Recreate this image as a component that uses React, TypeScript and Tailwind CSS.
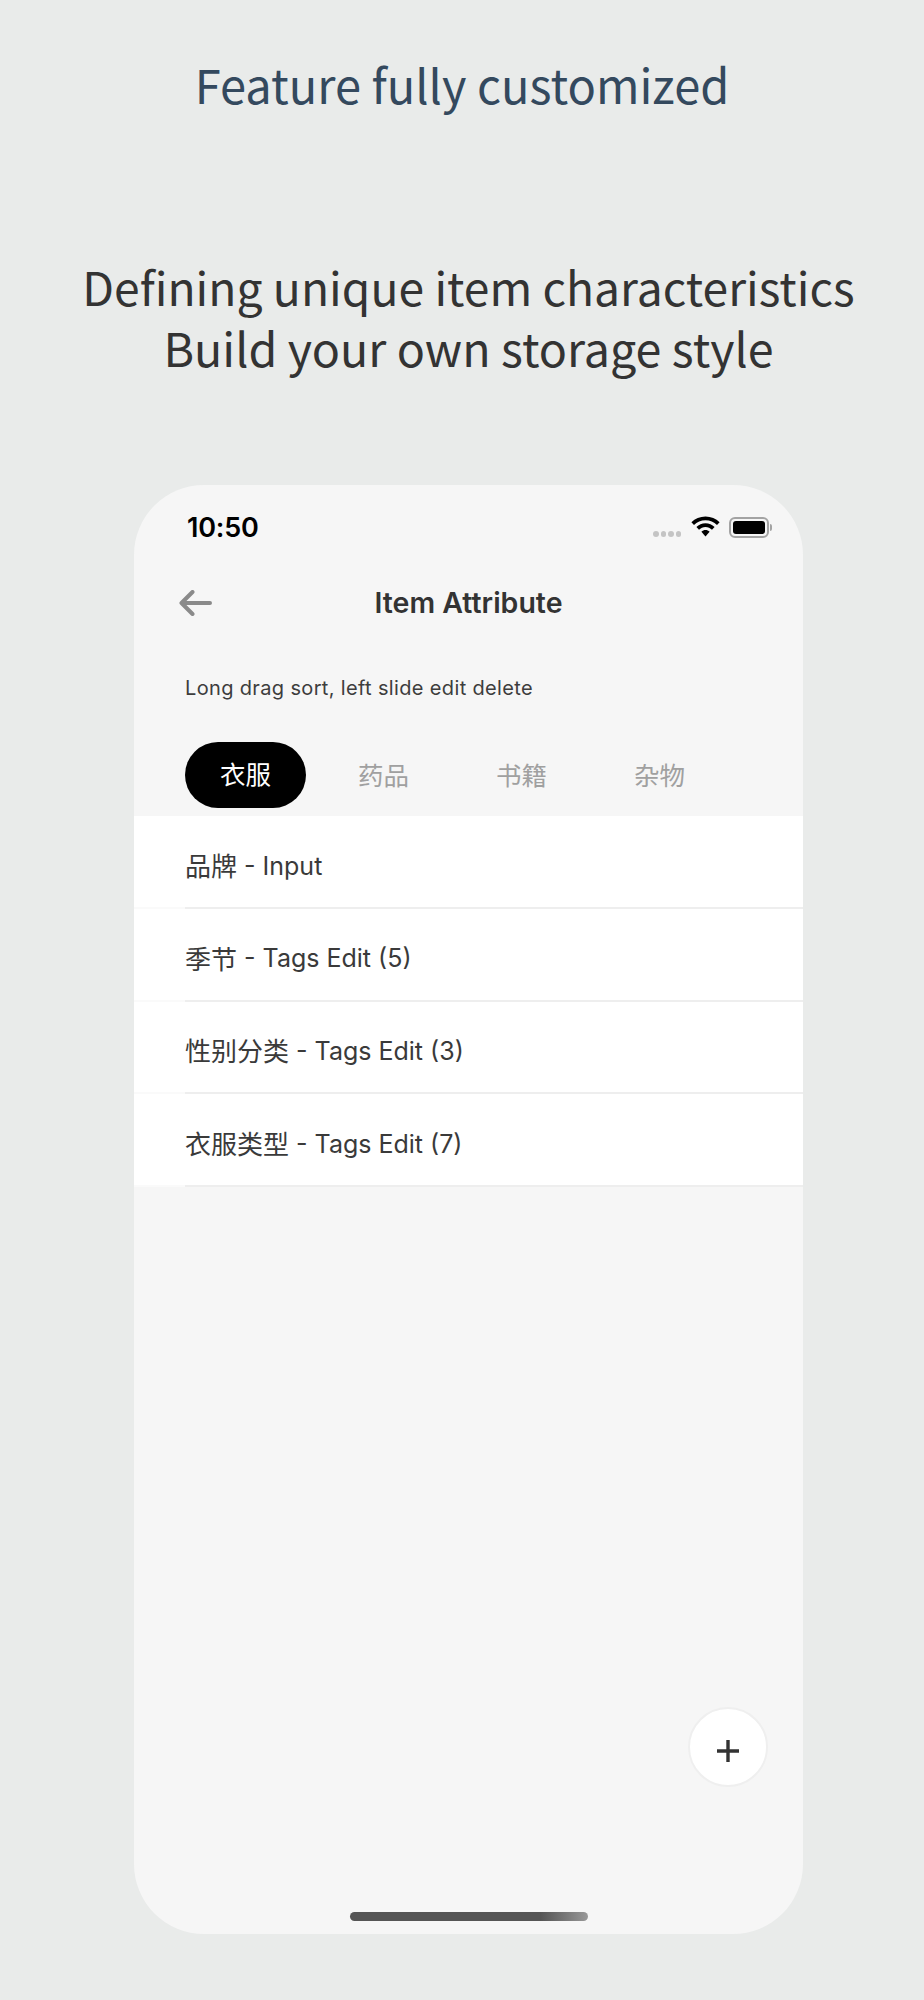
import React from "react";

const cjk = "font-['Inter','Noto_Sans_CJK_SC',sans-serif]";

const rows = [
  ["品牌", " - Input"],
  ["季节", " - Tags Edit (5)"],
  ["性别分类", " - Tags Edit (3)"],
  ["衣服类型", " - Tags Edit (7)"],
];
const tabs = ["药品", "书籍", "杂物"];

function Wifi() {
  return (
    <svg width="29" height="21" viewBox="0 0 29 21" className="block">
      <path d="M14.5 0.5C9 0.5 4 2.6 0.4 6.2L3 9C6 6 10 4.3 14.5 4.3S23 6 26 9L28.6 6.2C25 2.6 20 0.5 14.5 0.5Z" fill="#000" />
      <path d="M14.5 7.2C11 7.2 7.8 8.6 5.4 11L8 13.8C9.7 12.1 12 11 14.5 11S19.3 12.1 21 13.8L23.6 11C21.2 8.6 18 7.2 14.5 7.2Z" fill="#000" />
      <path d="M14.5 14C13 14 11.5 14.6 10.4 15.7L14.5 20.5L18.6 15.7C17.5 14.6 16 14 14.5 14Z" fill="#000" />
    </svg>
  );
}

function Battery() {
  return (
    <div className="flex items-center">
      <div className="w-[40px] h-[21px] rounded-[6px] border-2 border-[#a3a3a3] p-[2px]">
        <div className="w-full h-full rounded-[3px] bg-black" />
      </div>
      <div className="w-[2px] h-[7px] ml-[1px] rounded-r-full bg-[#a3a3a3]" />
    </div>
  );
}

export default function App() {
  return (
    <div className="w-[924px] h-[2000px] bg-[#e9ebea] flex flex-col overflow-hidden font-['Noto_Sans_CJK_SC',sans-serif]">
      <h1 className="mt-[49px] h-[70px] text-center text-[47px] leading-[70px] font-normal text-[#34495e]">
        Feature fully customized
      </h1>
      <div className="mt-[136px] mb-[1px] pl-[13px] text-center leading-[61px] font-normal text-[#333333]">
        <p className="text-[46.2px]">Defining unique item characteristics</p>
        <p className="text-[46.6px]">Build your own storage style</p>
      </div>
      <div className={`relative mt-[107px] ml-[134px] w-[669px] h-[1449px] rounded-[70px] bg-[#f6f6f6] overflow-hidden flex flex-col ${cjk}`}>
        <div className="h-[86px] shrink-0 pb-[2px] pl-[53px] pr-[31px] flex items-center justify-between">
          <span className="text-[27px] font-semibold text-black leading-none font-['Inter',sans-serif] tracking-[-0.2px]">10:50</span>
          <div className="flex items-center">
            <div className="flex gap-[2px] mt-[13px] mr-[10px]">
              <span className="w-[5.5px] h-[6px] rounded-full bg-[#c4c4c4]" />
              <span className="w-[5.5px] h-[6px] rounded-full bg-[#c4c4c4]" />
              <span className="w-[5.5px] h-[6px] rounded-full bg-[#c4c4c4]" />
              <span className="w-[5.5px] h-[6px] rounded-full bg-[#c4c4c4]" />
            </div>
            <div className="mr-[9px] -mt-[1px]"><Wifi /></div>
            <Battery />
          </div>
        </div>
        <div className="relative h-[64px] shrink-0 flex items-center justify-center">
          <svg width="34" height="26" viewBox="0 0 34 26" fill="none" className="absolute left-[44px] top-[19px]">
            <path d="M32 13H4M14.5 2L3.5 13L14.5 24" stroke="#8a8a8a" strokeWidth="4" strokeLinecap="round" strokeLinejoin="round" />
          </svg>
          <span className="text-[28.5px] font-semibold text-[#333333] leading-none">Item Attribute</span>
        </div>
        <p className="mt-[38px] pl-[51px] text-[20px] leading-[30px] text-[#3d3d3d] tracking-[0.35px]">Long drag sort, left slide edit delete</p>
        <div className="mt-[39px] pl-[51px] h-[66px] shrink-0 flex items-center gap-[17px] text-[25.5px]">
          <div className="w-[121px] h-[66px] pt-[1px] rounded-[33px] bg-black text-white flex items-center justify-center">衣服</div>
          {tabs.map((t) => (
            <div key={t} className="w-[121px] pt-[2px] text-center text-[#a0a0a0]">{t}</div>
          ))}
        </div>
        <div className="mt-[8px] bg-white">
          {rows.map(([zh, en]) => (
            <div key={zh} className="h-[92.75px] flex flex-col">
              <div className="flex-1 flex items-center pt-[10px] pl-[51px] text-[25px] text-[#3a3a3a] whitespace-pre">
                <span className="text-[26px]">{zh}</span>
                <span>{en}</span>
              </div>
              <div className="h-[2px] flex">
                <div className="w-[51px] bg-[#fafafa]" />
                <div className="flex-1 bg-[#eeeeee]" />
              </div>
            </div>
          ))}
        </div>
        <button className="absolute left-[554px] top-[1222px] w-[80px] h-[80px] rounded-full bg-white border-2 border-[#efefef] flex items-center justify-center">
          <svg width="24" height="24" viewBox="0 0 24 24" className="mt-[8px]">
            <path d="M12 1V23M1 12H23" stroke="#333333" strokeWidth="3.4" />
          </svg>
        </button>
        <div className="absolute left-[216px] bottom-[13px] w-[238px] h-[9px] rounded-full bg-gradient-to-r from-[#555555] from-[80%] to-[#999999]" />
      </div>
    </div>
  );
}
